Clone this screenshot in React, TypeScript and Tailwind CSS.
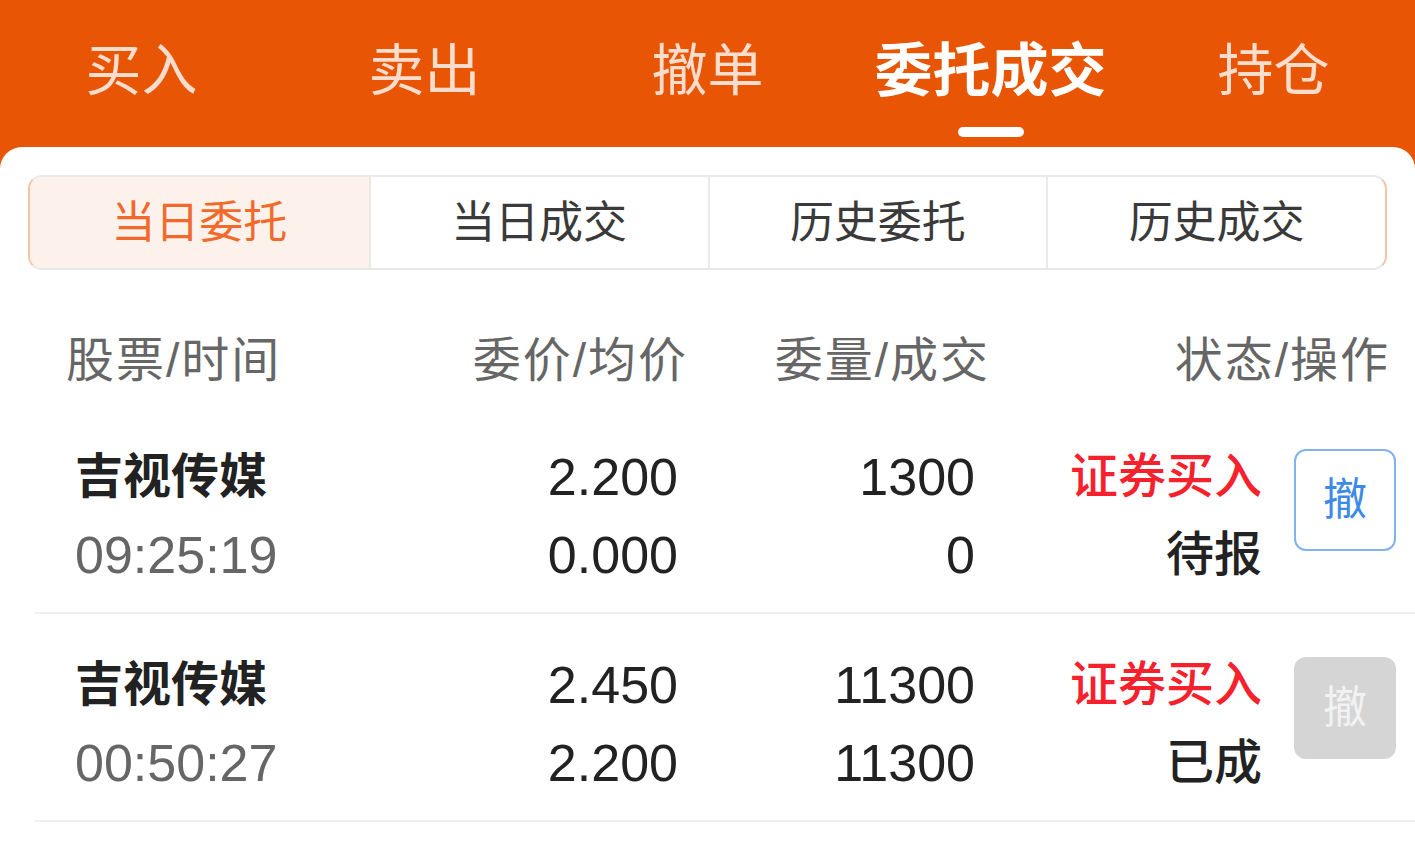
const topTabs = ["买入", "卖出", "撤单", "委托成交", "持仓"];
const segments = ["当日委托", "当日成交", "历史委托", "历史成交"];

const orders = [
  {
    name: "吉视传媒",
    time: "09:25:19",
    price: "2.200",
    avg: "0.000",
    qty: "1300",
    filled: "0",
    side: "证券买入",
    status: "待报",
    cancelable: true,
  },
  {
    name: "吉视传媒",
    time: "00:50:27",
    price: "2.450",
    avg: "2.200",
    qty: "11300",
    filled: "11300",
    side: "证券买入",
    status: "已成",
    cancelable: false,
  },
];

const font = "font-['Liberation_Sans','Noto_Sans_CJK_SC',sans-serif]";

export default function App() {
  return (
    <div className={`flex min-h-[854px] w-[1415px] flex-col bg-[#e85504] ${font}`}>
      {/* Top tabs */}
      <div className="grid h-[147px] grid-cols-5">
        {topTabs.map((t, i) => {
          const active = i === 3;
          return (
            <div key={t} className="flex flex-col items-center pt-[39px]">
              <span
                className={
                  active
                    ? "text-[58px] leading-[64px] font-bold text-white"
                    : "text-[56px] leading-[64px] text-white/80"
                }
              >
                {t}
              </span>
              {active && <div className="mt-[24px] h-[10px] w-[66px] rounded-full bg-white" />}
            </div>
          );
        })}
      </div>

      {/* Card */}
      <div className="flex-1 rounded-t-[22px] bg-white">
        {/* Segmented control */}
        <div className="px-[28px] pt-[28px]">
          <div className="grid h-[95px] grid-cols-4 overflow-hidden rounded-[14px] border-2 border-[#e9e9e9] border-l-[#f6c3a8] border-r-[#f6c3a8]">
            {segments.map((s, i) => (
              <div
                key={s}
                className={`flex items-center justify-center text-[44px] ${
                  i === 0 ? "bg-[#fdf2eb] text-[#f26a2b]" : "border-l-2 border-[#e9e9e9] text-[#3a3a3a]"
                }`}
              >
                {s}
              </div>
            ))}
          </div>
        </div>

        {/* Column header */}
        <div className="grid h-[136px] grid-cols-[354px_268px_302px_400px] items-center pl-[66px] pt-[46px] text-[48px] tracking-[2px] text-[#666]">
          <div>股票/时间</div>
          <div className="text-right">委价/均价</div>
          <div className="text-right">委量/成交</div>
          <div className="text-right">状态/操作</div>
        </div>

        {/* Orders */}
        <div className="ml-[35px]">
          {orders.map((o, i) => (
            <div
              key={i}
              className="flex h-[208px] items-center border-b-2 border-[#efefef] pl-[40px] pr-[19px]"
            >
              <div className="grid flex-1 grid-cols-[345px_258px_297px_1fr] pt-[14px]">
                <div className="flex flex-col">
                  <span className="text-[48px] leading-[78px] font-semibold text-[#222]">{o.name}</span>
                  <span className="text-[52px] leading-[78px] text-[#666]">{o.time}</span>
                </div>
                <div className="flex flex-col items-end">
                  <span className="text-[52px] leading-[78px] text-[#222]">{o.price}</span>
                  <span className="text-[52px] leading-[78px] text-[#222]">{o.avg}</span>
                </div>
                <div className="flex flex-col items-end">
                  <span className="text-[52px] leading-[78px] text-[#222]">{o.qty}</span>
                  <span className="text-[52px] leading-[78px] text-[#222]">{o.filled}</span>
                </div>
                <div className="flex flex-col items-end">
                  <span className="text-[48px] leading-[78px] font-medium text-[#f5222d]">{o.side}</span>
                  <span className="text-[48px] leading-[78px] font-medium text-[#222]">{o.status}</span>
                </div>
              </div>
              <button
                className={`mb-[18px] ml-[32px] flex h-[102px] w-[102px] items-center justify-center rounded-[12px] text-[44px] ${
                  o.cancelable
                    ? "border-2 border-[#80b3ef] bg-white text-[#3d8ae6]"
                    : "bg-[#d5d5d5] text-[#f2f2f2]"
                }`}
              >
                撤
              </button>
            </div>
          ))}
        </div>
      </div>
    </div>
  );
}
